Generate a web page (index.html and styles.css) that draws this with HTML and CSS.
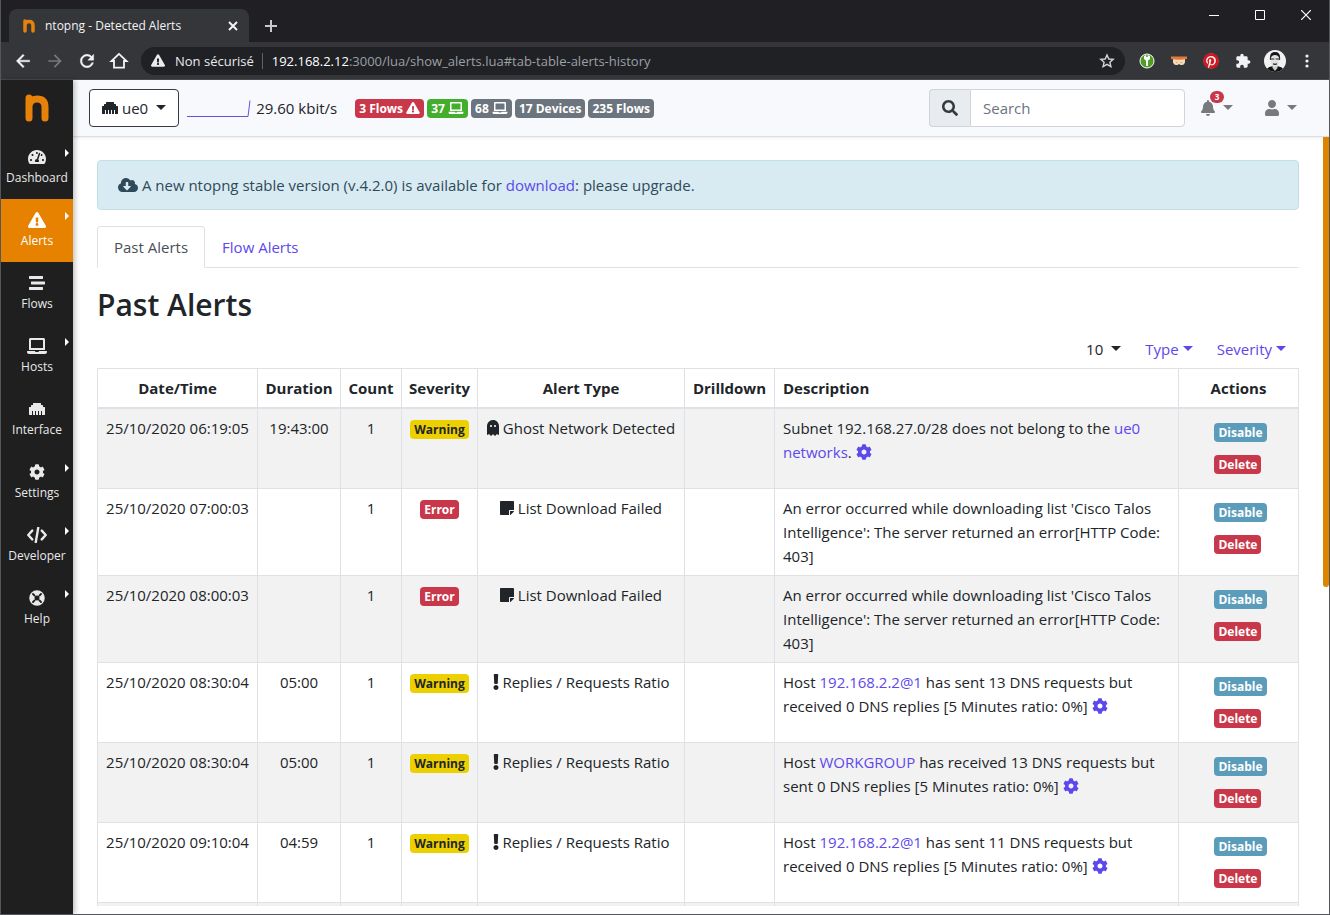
FILE: index.html
```html
<!DOCTYPE html>
<html lang="en">
<head>
<meta charset="utf-8">
<title>ntopng - Detected Alerts</title>
<link rel="stylesheet" href="styles.css">
</head>
<body>
<svg class="sprite" aria-hidden="true">
  <symbol id="warn" viewBox="0 0 576 512"><path d="M569.517 440.013C587.975 472.007 564.806 512 527.94 512H48.054c-36.937 0-59.999-40.055-41.577-71.987L246.423 23.985c18.467-32.009 64.72-31.951 83.154 0l239.94 416.028zM288 354c-25.405 0-46 20.595-46 46s20.595 46 46 46 46-20.595 46-46-20.595-46-46-46zm-43.673-165.346l7.418 136c.347 6.364 5.609 11.346 11.982 11.346h48.546c6.373 0 11.635-4.982 11.982-11.346l7.418-136c.375-6.874-5.098-12.654-11.982-12.654h-63.383c-6.884 0-12.356 5.78-11.981 12.654z"/></symbol>
  <symbol id="gauge" viewBox="0 0 576 512"><path d="M288 32C128.94 32 0 160.94 0 320c0 52.8 14.25 102.26 39.06 144.8 5.61 9.62 16.3 15.2 27.44 15.2h443c11.14 0 21.83-5.58 27.44-15.2C561.75 422.26 576 372.8 576 320c0-159.06-128.94-288-288-288zm0 64c14.71 0 26.58 10.13 30.32 23.65-1.11 2.26-2.64 4.23-3.45 6.67l-9.22 27.67c-5.13 3.49-10.97 6.01-17.64 6.01-17.67 0-32-14.33-32-32S270.33 96 288 96zM96 384c-17.67 0-32-14.33-32-32s14.33-32 32-32 32 14.33 32 32-14.33 32-32 32zm48-160c-17.67 0-32-14.33-32-32s14.33-32 32-32 32 14.33 32 32-14.33 32-32 32zm246.77-72.41l-61.33 184C343.13 347.33 352 364.54 352 384c0 11.72-3.38 22.55-8.88 32H232.88c-5.5-9.45-8.88-20.28-8.88-32 0-33.94 26.5-61.43 59.9-63.59l61.34-184.01c4.17-12.56 17.73-19.45 30.36-15.17 12.57 4.19 19.35 17.79 15.17 30.36zm14.66 57.2l15.52-46.55c3.47-1.29 7.13-2.23 11.05-2.23 17.67 0 32 14.33 32 32s-14.33 32-32 32c-11.38-.01-20.89-6.28-26.57-15.22zM480 384c-17.67 0-32-14.33-32-32s14.33-32 32-32 32 14.33 32 32-14.33 32-32 32z"/></symbol>
  <symbol id="stream" viewBox="0 0 512 512"><path d="M16 128h416c8.84 0 16-7.16 16-16V48c0-8.84-7.16-16-16-16H16C7.16 32 0 39.16 0 48v64c0 8.84 7.16 16 16 16zm480 80H80c-8.84 0-16 7.16-16 16v64c0 8.84 7.16 16 16 16h416c8.84 0 16-7.16 16-16v-64c0-8.84-7.16-16-16-16zm-64 176H16c-8.84 0-16 7.16-16 16v64c0 8.84 7.16 16 16 16h416c8.84 0 16-7.16 16-16v-64c0-8.84-7.16-16-16-16z"/></symbol>
  <symbol id="laptop" viewBox="0 0 640 512"><path d="M624 416H381.54c-.74 19.81-14.71 32-32.74 32H288c-18.69 0-33.02-17.47-32.77-32H16c-8.8 0-16 7.2-16 16v16c0 35.2 28.8 64 64 64h512c35.2 0 64-28.8 64-64v-16c0-8.8-7.2-16-16-16zM576 48c0-26.4-21.6-48-48-48H112C85.6 0 64 21.6 64 48v336h512V48zm-64 272H128V64h384v256z"/></symbol>
  <symbol id="ethernet" viewBox="0 0 512 512"><path d="M496 192h-48v-48c0-8.8-7.2-16-16-16h-48V80c0-8.8-7.2-16-16-16H144c-8.8 0-16 7.2-16 16v48H80c-8.8 0-16 7.2-16 16v48H16c-8.8 0-16 7.2-16 16v224c0 8.8 7.2 16 16 16h80V320h32v128h64V320h32v128h64V320h32v128h64V320h32v128h80c8.8 0 16-7.2 16-16V208c0-8.8-7.2-16-16-16z"/></symbol>
  <symbol id="cog" viewBox="0 0 512 512"><path d="M487.4 315.7l-42.6-24.6c4.3-23.2 4.3-47 0-70.2l42.6-24.6c4.9-2.8 7.1-8.6 5.5-14-11.1-35.6-30-67.8-54.7-94.6-3.8-4.1-10-5.1-14.8-2.3L380.8 110c-17.9-15.4-38.5-27.3-60.8-35.1V25.8c0-5.6-3.9-10.5-9.4-11.7-36.7-8.2-74.3-7.8-109.2 0-5.5 1.2-9.4 6.1-9.4 11.7V75c-22.2 7.9-42.8 19.8-60.8 35.1L88.7 85.5c-4.9-2.8-11-1.9-14.8 2.3-24.7 26.7-43.6 58.9-54.7 94.6-1.7 5.4.6 11.2 5.5 14L67.3 221c-4.3 23.2-4.3 47 0 70.2l-42.6 24.6c-4.9 2.8-7.1 8.6-5.5 14 11.1 35.6 30 67.8 54.7 94.6 3.8 4.1 10 5.1 14.8 2.3l42.6-24.6c17.9 15.4 38.5 27.3 60.8 35.1v49.2c0 5.6 3.9 10.5 9.4 11.7 36.7 8.2 74.3 7.8 109.2 0 5.5-1.2 9.4-6.1 9.4-11.7v-49.2c22.2-7.9 42.8-19.8 60.8-35.1l42.6 24.6c4.9 2.8 11 1.9 14.8-2.3 24.7-26.7 43.6-58.9 54.7-94.6 1.5-5.5-.7-11.3-5.6-14.1zM256 336c-44.1 0-80-35.9-80-80s35.9-80 80-80 80 35.9 80 80-35.9 80-80 80z"/></symbol>
  <symbol id="code" viewBox="0 0 640 512"><path d="M360 24L280 488M168 116L40 256l128 140M472 116l128 140-128 140" fill="none" stroke="currentColor" stroke-width="76" stroke-linecap="round" stroke-linejoin="round"/></symbol>
  <symbol id="ring" viewBox="0 0 512 512"><circle cx="256" cy="256" r="164" fill="none" stroke="currentColor" stroke-width="168"/><path d="M128 128l50 50M384 128l-50 50M128 384l50-50M384 384l-50-50" stroke="#1f1f1f" stroke-width="60" stroke-linecap="round"/></symbol>
  <symbol id="search" viewBox="0 0 512 512"><path d="M505 442.7L405.3 343c-4.5-4.5-10.6-7-17-7H372c27.6-35.3 44-79.7 44-128C416 93.1 322.9 0 208 0S0 93.1 0 208s93.1 208 208 208c48.3 0 92.7-16.4 128-44v16.3c0 6.4 2.5 12.5 7 17l99.7 99.7c9.4 9.4 24.6 9.4 33.9 0l28.3-28.3c9.4-9.4 9.4-24.6.1-34zM208 336c-70.7 0-128-57.2-128-128 0-70.7 57.2-128 128-128 70.7 0 128 57.2 128 128 0 70.7-57.2 128-128 128z"/></symbol>
  <symbol id="bell" viewBox="0 0 448 512"><path d="M224 512c35.32 0 63.97-28.65 63.97-64H160.03c0 35.35 28.65 64 63.97 64zm215.39-149.71c-19.32-20.76-55.47-51.99-55.47-154.29 0-77.7-54.48-139.9-127.94-155.16V32c0-17.67-14.32-32-31.98-32s-31.98 14.33-31.98 32v20.84C118.56 68.1 64.08 130.3 64.08 208c0 102.3-36.15 133.53-55.47 154.29-6 6.45-8.66 14.16-8.61 21.71.11 16.4 12.98 32 32.1 32h383.8c19.12 0 32-15.6 32.1-32 .05-7.55-2.61-15.27-8.61-21.71z"/></symbol>
  <symbol id="user" viewBox="0 0 448 512"><path d="M224 256c70.7 0 128-57.3 128-128S294.7 0 224 0 96 57.3 96 128s57.3 128 128 128zm89.6 32h-16.7c-22.2 10.2-46.9 16-72.9 16s-50.6-5.8-72.9-16h-16.7C60.2 288 0 348.2 0 422.4V464c0 26.5 21.5 48 48 48h352c26.5 0 48-21.5 48-48v-41.6c0-74.2-60.2-134.4-134.4-134.4z"/></symbol>
  <symbol id="cloud" viewBox="0 0 640 512"><path d="M537.6 226.6c4.1-10.7 6.4-22.4 6.4-34.6 0-53-43-96-96-96-19.7 0-38.1 6-53.3 16.2C367 64.2 315.3 32 256 32c-88.4 0-160 71.6-160 160 0 2.7.1 5.4.2 8.1C40.2 219.8 0 273.2 0 336c0 79.5 64.5 144 144 144h368c70.7 0 128-57.3 128-128 0-61.9-44-113.6-102.4-125.4zm-132.9 88.7L299.3 420.7c-6.2 6.2-16.4 6.2-22.6 0L171.3 315.3c-10.1-10.1-2.9-27.3 11.3-27.3H248V176c0-8.8 7.2-16 16-16h48c8.8 0 16 7.2 16 16v112h65.4c14.2 0 21.4 17.2 11.3 27.3z"/></symbol>
  <symbol id="ghost" viewBox="0 0 384 512"><path d="M186.1.09C81.01 3.24 0 94.92 0 200.05v263.92c0 14.26 17.23 21.39 27.31 11.31l24.92-18.53c6.66-4.95 16-3.99 21.51 2.21l42.95 48.35c6.25 6.25 16.38 6.25 22.63 0l40.72-45.85c6.37-7.17 17.56-7.17 23.92 0l40.72 45.85c6.25 6.25 16.38 6.25 22.63 0l42.95-48.35c5.51-6.2 14.85-7.17 21.51-2.21l24.92 18.53c10.08 10.08 27.31 2.94 27.31-11.31V192C384 84 294.83-3.17 186.1.09zM128 224c-17.67 0-32-14.33-32-32s14.33-32 32-32 32 14.33 32 32-14.33 32-32 32zm128 0c-17.67 0-32-14.33-32-32s14.33-32 32-32 32 14.33 32 32-14.33 32-32 32z"/></symbol>
  <symbol id="note" viewBox="0 0 448 512"><path d="M312 320h136V56c0-13.3-10.7-24-24-24H24C10.7 32 0 42.7 0 56v400c0 13.3 10.7 24 24 24h264V344c0-13.2 10.8-24 24-24zm129 55l-98 98c-4.5 4.5-10.6 7-17 7h-6V352h128v6.1c0 6.3-2.5 12.4-7 16.9z"/></symbol>
  <symbol id="bang" viewBox="0 0 192 512"><path d="M176 432c0 44.112-35.888 80-80 80s-80-35.888-80-80 35.888-80 80-80 80 35.888 80 80zM25.26 25.199l13.6 272C39.499 309.972 50.041 320 62.83 320h66.34c12.789 0 23.331-10.028 23.97-22.801l13.6-272C167.425 11.49 156.496 0 142.77 0H49.23C35.504 0 24.575 11.49 25.26 25.199z"/></symbol>
  <symbol id="logo" viewBox="0 0 24 28"><path d="M4 24V4M4 12Q5 5 12 5Q20 5 20 13V24" fill="none" stroke="#e6820a" stroke-width="7" stroke-linecap="round" stroke-linejoin="round"/></symbol>
</svg>

<div class="window">
  <header class="titlebar">
    <div class="browser-tab">
      <svg class="favicon"><use href="#logo"/></svg>
      <span class="tab-title">ntopng - Detected Alerts</span>
      <button class="chrome-btn" aria-label="Close tab"><svg width="10" height="10" viewBox="0 0 10 10"><path d="M1 1l8 8M9 1L1 9" stroke="currentColor" stroke-width="2"/></svg></button>
    </div>
    <button class="chrome-btn new-tab" aria-label="New tab"><svg width="12" height="12" viewBox="0 0 12 12"><path d="M6 0v12M0 6h12" stroke="currentColor" stroke-width="2"/></svg></button>
    <div class="window-controls">
      <button class="chrome-btn" aria-label="Minimize"><svg width="10" height="10" viewBox="0 0 10 10"><path d="M0 5.500h10" stroke="#fff"/></svg></button>
      <button class="chrome-btn" aria-label="Maximize"><svg width="10" height="10" viewBox="0 0 10 10"><path d="M.5 .5h9v9h-9z" fill="none" stroke="#fff"/></svg></button>
      <button class="chrome-btn" aria-label="Close"><svg width="10" height="10" viewBox="0 0 10 10"><path d="M0 0l10 10M10 0L0 10" stroke="#fff" stroke-width="1.200"/></svg></button>
    </div>
  </header>

  <div class="toolbar">
    <div class="nav-buttons">
      <button class="chrome-btn" aria-label="Back"><svg width="20" height="20" viewBox="0 0 24 24"><path d="M20 11H7.830l5.590-5.590L12 4l-8 8 8 8 1.410-1.410L7.830 13H20v-2z" stroke="currentColor" stroke-width=".5"/></svg></button>
      <button class="chrome-btn dim" aria-label="Forward"><svg width="20" height="20" viewBox="0 0 24 24"><path d="M12 4l-1.410 1.410L16.170 11H4v2h12.170l-5.580 5.590L12 20l8-8z"/></svg></button>
      <button class="chrome-btn" aria-label="Reload"><svg width="20" height="20" viewBox="0 0 24 24"><path d="M17.650 6.350C16.200 4.900 14.210 4 12 4c-4.420 0-7.990 3.580-7.990 8s3.570 8 7.990 8c3.730 0 6.840-2.550 7.730-6h-2.080c-.82 2.330-3.040 4-5.650 4-3.310 0-6-2.690-6-6s2.690-6 6-6c1.660 0 3.140.69 4.220 1.780L13 11h7V4l-2.350 2.350z" stroke="currentColor" stroke-width=".5"/></svg></button>
      <button class="chrome-btn" aria-label="Home"><svg width="20" height="20" viewBox="0 0 24 24"><path d="M12 3.500L3 12h3v8h12v-8h3z" fill="none" stroke="currentColor" stroke-width="2.200"/></svg></button>
    </div>
    <div class="omnibox">
      <svg class="omni-warn"><use href="#warn"/></svg>
      <span>Non sécurisé</span>
      <span class="url"><b>192.168.2.12</b>:3000/lua/show_alerts.lua#tab-table-alerts-history</span>
      <button class="chrome-btn star" aria-label="Bookmark"><svg width="16" height="16" viewBox="0 0 16 16"><path d="M8 2l1.800 4 4.400.4-3.300 2.900 1 4.300L8 11.300l-3.900 2.300 1-4.300L1.800 6.400 6.200 6z" fill="none" stroke="currentColor" stroke-width="1.400"/></svg></button>
    </div>
    <div class="extensions">
      <button class="chrome-btn" aria-label="Password extension"><svg width="16" height="16" viewBox="0 0 16 16"><circle cx="8" cy="8" r="7" fill="#4f9d22" stroke="#fff" stroke-width="1"/><path d="M5 3q3-2 6 0v3L9 7.500V13H7V7.500L5 6z" fill="#fff"/><circle cx="8" cy="3" r="1" fill="#4f9d22"/></svg></button>
      <button class="chrome-btn" aria-label="Privacy extension"><svg width="16" height="16" viewBox="0 0 16 16"><path d="M2 6h12v3.500q-1 2.500-3 2.500H9.500L8 11l-1.500 1H5q-2 0-3-2.500z" fill="#f3d9b8"/><path d="M0 3.500h16V6q-8 1.500-16 0z" fill="#e07a35"/><path d="M5 9.500h1.500M9.500 9.500H11" stroke="#c9a67c"/></svg></button>
      <button class="chrome-btn" aria-label="Pinterest"><svg width="16" height="16" viewBox="0 0 496 512"><circle cx="248" cy="256" r="240" fill="#fff"/><path fill="#d01622" stroke="#d01622" stroke-width="6" d="M496 256c0 137-111 248-248 248-25.6 0-50.2-3.9-73.4-11.1 10.1-16.5 25.2-43.5 30.8-65 3-11.6 15.4-59 15.4-59 8.1 15.4 31.7 28.5 56.8 28.5 74.8 0 128.7-68.8 128.7-154.3 0-81.9-66.9-143.2-152.9-143.2-107 0-163.9 71.8-163.9 150.1 0 36.4 19.4 81.7 50.3 96.1 4.7 2.2 7.2 1.2 8.3-3.3.8-3.4 5-20.3 6.9-28.1.6-2.5.3-4.7-1.7-7.1-10.1-12.5-18.3-35.300-18.3-56.6 0-54.7 41.4-107.6 112-107.6 60.9 0 103.6 41.5 103.6 100.9 0 67.1-33.9 113.6-78 113.6-24.3 0-42.600-20.1-36.7-44.8 7-29.5 20.5-61.3 20.5-82.6 0-19-10.2-34.9-31.4-34.9-24.9 0-44.9 25.7-44.9 60.2 0 22 7.4 36.8 7.4 36.8s-24.5 103.8-29 123.2c-5 21.4-3 51.6-.9 71.2C65.4 450.9 0 361.1 0 256 0 119 111 8 248 8s248 111 248 248z"/></svg></button>
      <button class="chrome-btn" aria-label="Extensions"><svg width="16" height="16" viewBox="0 0 24 24"><path d="M20.500 11H19V7c0-1.100-.9-2-2-2h-4V3.500C13 2.120 11.880 1 10.500 1S8 2.120 8 3.500V5H4c-1.100 0-1.990.9-1.990 2v3.800H3.500c1.490 0 2.700 1.210 2.700 2.700s-1.210 2.700-2.700 2.700H2V20c0 1.100.9 2 2 2h3.800v-1.500c0-1.490 1.210-2.700 2.700-2.700 1.490 0 2.700 1.210 2.700 2.700V22H17c1.100 0 2-.9 2-2v-4h1.500c1.380 0 2.500-1.120 2.500-2.500S21.880 11 20.500 11z"/></svg></button>
      <button class="chrome-btn" aria-label="Profile"><svg class="avatar" width="22" height="22" viewBox="0 0 22 22"><clipPath id="face"><circle cx="11" cy="11" r="11"/></clipPath><g clip-path="url(#face)"><path d="M0 0h22v22H0z" fill="#f2f2f2"/><path d="M2 22q0-6 9-6t9 6z" fill="#111"/><path d="M8.500 14h5v4L11 21l-2.500-3z" fill="#ccc"/><path d="M6 10q-1-8 5-8t5 8z" fill="#161616"/><path d="M6.800 8q1-3 4.200-3t4.200 3v4q-1 5-4.200 5t-4.200-5z" fill="#e0e0e0"/><path d="M6.500 9h3.800M11.700 9h3.800M9 13.800q2 1 4 0" stroke="#222" fill="none" stroke-width="1.200"/></g></svg></button>
      <button class="chrome-btn" aria-label="Menu"><svg width="16" height="16" viewBox="0 0 16 16"><circle cx="8" cy="3" r="1.600"/><circle cx="8" cy="8" r="1.600"/><circle cx="8" cy="13" r="1.600"/></svg></button>
    </div>
  </div>

  <div class="page">
    <nav class="sidebar">
      <a class="brand" href="#" aria-label="ntopng"><svg width="24" height="28"><use href="#logo"/></svg></a>
      <a class="side-item has-sub" href="#"><svg class="side-icon"><use href="#gauge"/></svg>Dashboard</a>
      <a class="side-item has-sub active" href="#"><svg class="side-icon"><use href="#warn"/></svg>Alerts</a>
      <a class="side-item" href="#"><svg class="side-icon"><use href="#stream"/></svg>Flows</a>
      <a class="side-item has-sub" href="#"><svg class="side-icon"><use href="#laptop"/></svg>Hosts</a>
      <a class="side-item" href="#"><svg class="side-icon"><use href="#ethernet"/></svg>Interface</a>
      <a class="side-item has-sub" href="#"><svg class="side-icon"><use href="#cog"/></svg>Settings</a>
      <a class="side-item has-sub" href="#"><svg class="side-icon"><use href="#code"/></svg>Developer</a>
      <a class="side-item has-sub" href="#"><svg class="side-icon"><use href="#ring"/></svg>Help</a>
    </nav>

    <div class="content">
      <div class="navbar">
        <button class="iface caret"><svg class="icon"><use href="#ethernet"/></svg>ue0</button>
        <svg class="spark" viewBox="0 0 64 20"><path d="M0 18.500h61l2-16" fill="none" stroke="#6a50e0"/></svg>
        <span class="rate">29.60 kbit/s</span>
        <div class="status">
          <a class="badge red" href="#">3 Flows <svg class="badge-icon"><use href="#warn"/></svg></a>
          <a class="badge green" href="#">37 <svg class="badge-icon wide"><use href="#laptop"/></svg></a>
          <a class="badge grey" href="#">68 <svg class="badge-icon wide"><use href="#laptop"/></svg></a>
          <a class="badge grey" href="#">17 Devices</a>
          <a class="badge grey" href="#">235 Flows</a>
        </div>
        <form class="search">
          <label for="q" aria-label="Search"><svg class="icon"><use href="#search"/></svg></label>
          <input id="q" type="text" placeholder="Search">
        </form>
        <button class="menu caret" aria-label="Notifications"><svg class="icon bell"><use href="#bell"/></svg><span class="count">3</span></button>
        <button class="menu user caret" aria-label="Account"><svg class="icon"><use href="#user"/></svg></button>
      </div>

      <main class="main">
        <div class="alert"><svg class="icon cloud"><use href="#cloud"/></svg> A new ntopng stable version (v.4.2.0) is available for <a href="#">download</a>: please upgrade.</div>
        <nav class="tabs">
          <a class="tab current" href="#">Past Alerts</a>
          <a class="tab" href="#">Flow Alerts</a>
        </nav>
        <h2>Past Alerts</h2>
        <div class="filters">
          <button class="filter caret dark">10</button>
          <button class="filter caret">Type</button>
          <button class="filter caret">Severity</button>
        </div>
        <table class="alerts">
          <colgroup><col class="c-date"><col class="c-dur"><col class="c-count"><col class="c-sev"><col class="c-type"><col class="c-drill"><col><col class="c-act"></colgroup>
          <thead>
            <tr><th>Date/Time</th><th>Duration</th><th>Count</th><th>Severity</th><th>Alert Type</th><th>Drilldown</th><th class="desc">Description</th><th>Actions</th></tr>
          </thead>
          <tbody>
            <tr><td>25/10/2020 06:19:05</td><td>19:43:00</td><td>1</td><td><span class="badge yellow">Warning</span></td><td><svg class="icon ghost"><use href="#ghost"/></svg> Ghost Network Detected</td><td></td><td class="desc">Subnet 192.168.27.0/28 does not belong to the <a href="#">ue0 networks</a>. <a href="#" aria-label="Configure"><svg class="icon"><use href="#cog"/></svg></a></td><td><div class="actions"><button class="badge blue">Disable</button><button class="badge red">Delete</button></div></td></tr>
            <tr><td>25/10/2020 07:00:03</td><td></td><td>1</td><td><span class="badge red">Error</span></td><td><svg class="icon note"><use href="#note"/></svg> List Download Failed</td><td></td><td class="desc">An error occurred while downloading list 'Cisco Talos Intelligence': The server returned an error[HTTP Code: 403]</td><td><div class="actions"><button class="badge blue">Disable</button><button class="badge red">Delete</button></div></td></tr>
            <tr><td>25/10/2020 08:00:03</td><td></td><td>1</td><td><span class="badge red">Error</span></td><td><svg class="icon note"><use href="#note"/></svg> List Download Failed</td><td></td><td class="desc">An error occurred while downloading list 'Cisco Talos Intelligence': The server returned an error[HTTP Code: 403]</td><td><div class="actions"><button class="badge blue">Disable</button><button class="badge red">Delete</button></div></td></tr>
            <tr><td>25/10/2020 08:30:04</td><td>05:00</td><td>1</td><td><span class="badge yellow">Warning</span></td><td><svg class="icon bang"><use href="#bang"/></svg> Replies / Requests Ratio</td><td></td><td class="desc">Host <a href="#">192.168.2.2@1</a> has sent 13 DNS requests but received 0 DNS replies [5 Minutes ratio: 0%] <a href="#" aria-label="Configure"><svg class="icon"><use href="#cog"/></svg></a></td><td><div class="actions"><button class="badge blue">Disable</button><button class="badge red">Delete</button></div></td></tr>
            <tr><td>25/10/2020 08:30:04</td><td>05:00</td><td>1</td><td><span class="badge yellow">Warning</span></td><td><svg class="icon bang"><use href="#bang"/></svg> Replies / Requests Ratio</td><td></td><td class="desc">Host <a href="#">WORKGROUP</a> has received 13 DNS requests but sent 0 DNS replies [5 Minutes ratio: 0%] <a href="#" aria-label="Configure"><svg class="icon"><use href="#cog"/></svg></a></td><td><div class="actions"><button class="badge blue">Disable</button><button class="badge red">Delete</button></div></td></tr>
            <tr><td>25/10/2020 09:10:04</td><td>04:59</td><td>1</td><td><span class="badge yellow">Warning</span></td><td><svg class="icon bang"><use href="#bang"/></svg> Replies / Requests Ratio</td><td></td><td class="desc">Host <a href="#">192.168.2.2@1</a> has sent 11 DNS requests but received 0 DNS replies [5 Minutes ratio: 0%] <a href="#" aria-label="Configure"><svg class="icon"><use href="#cog"/></svg></a></td><td><div class="actions"><button class="badge blue">Disable</button><button class="badge red">Delete</button></div></td></tr>
            <tr><td></td><td></td><td></td><td></td><td></td><td></td><td></td><td></td></tr>
          </tbody>
        </table>
      </main>
      <div class="scroll-thumb"></div>
    </div>
  </div>
</div>
</body>
</html>
```
FILE: styles.css
```css
* { box-sizing: border-box; }

body {
  margin: 0;
  font: 15px/24px "Open Sans", "Noto Sans", sans-serif;
  color: #212529;
}

a { color: #5d48ec; text-decoration: none; }
button { font: inherit; color: inherit; background: none; border: 0; padding: 0; }
svg { fill: currentColor; }

.sprite { position: absolute; width: 0; height: 0; }

.window {
  height: 100vh;
  display: flex;
  flex-direction: column;
  overflow: hidden;
  background: #202124;
  border: solid #55565a;
  border-width: 0 1px 1px;
}

/* Browser frame */
.titlebar {
  display: flex;
  height: 42px;
  padding-left: 8px;
  background: #202024;
}

.browser-tab {
  display: flex;
  align-items: center;
  width: 240px;
  margin-top: 9px;
  padding: 1px 10px 0 13px;
  border-radius: 8px 8px 0 0;
  background: #35363a;
  color: #f1f3f4;
  font-size: 12px;
}

.favicon { width: 14px; height: 14px; margin-right: 9px; }
.tab-title { flex: 1; white-space: nowrap; }

.chrome-btn {
  display: flex;
  align-items: center;
  justify-content: center;
  color: #f1f3f4;
}

.browser-tab .chrome-btn { width: 12px; height: 12px; }
.new-tab { width: 24px; margin: 10px 0 0 10px; color: #c8c9cb; }
.window-controls { display: flex; height: 30px; margin-left: auto; }
.window-controls .chrome-btn { width: 46px; }

.toolbar {
  display: flex;
  align-items: center;
  height: 38px;
  background: #35363a;
  border-bottom: 1px solid #4a4b4f;
  color: #e8eaed;
  font-size: 13px;
}

.nav-buttons { display: flex; gap: 12px; padding: 0 12px; }
.chrome-btn.dim { color: #77787c; }

.omnibox {
  flex: 1;
  display: flex;
  align-items: center;
  height: 28px;
  padding: 0 10px;
  border-radius: 14px;
  background: #202124;
  white-space: nowrap;
}

.omni-warn { width: 14px; height: 13px; margin-right: 10px; }
.url { margin-left: 8px; padding-left: 9px; border-left: 1px solid #5f6368; line-height: 16px; color: #9aa0a6; }
.url b { font-weight: 400; color: #fff; }
.star { margin-left: auto; color: #d5d6d8; }

.extensions { display: flex; align-items: center; gap: 16px; padding: 0 14px; }
.extensions .chrome-btn { width: 16px; }
.avatar { flex: none; }

/* Application */
.page { flex: 1; display: flex; min-height: 0; background: #fff; }

.sidebar {
  width: 72px;
  flex: none;
  background: #1f1f1f;
  box-shadow: 2px 0 5px rgba(0, 0, 0, .25);
  z-index: 2;
}

.brand { display: flex; justify-content: center; height: 56px; padding-top: 14px; }

.side-item {
  position: relative;
  display: flex;
  flex-direction: column;
  align-items: center;
  height: 63px;
  padding-top: 13px;
  gap: 1px;
  color: #e9e9e9;
  font-size: 12px;
}

.side-item.active { background: #e68200; color: #fff; }
.side-icon { width: 20px; height: 16px; }

.has-sub::after {
  content: "";
  position: absolute;
  right: 4px;
  top: 13px;
  border: 4px solid transparent;
  border-left-color: #fff;
  border-right: 0;
}

.content { position: relative; flex: 1; min-width: 0; display: flex; flex-direction: column; }

.navbar {
  display: flex;
  align-items: center;
  height: 57px;
  padding: 0 32px 0 16px;
  background: #f8f9fc;
  border-bottom: 1px solid #dcdee2;
  box-shadow: 0 1px 3px rgba(0, 0, 0, .08);
}

.icon { width: 16px; height: 16px; vertical-align: -2px; }

.caret::after {
  content: "";
  display: inline-block;
  margin-left: 4px;
  vertical-align: 4px;
  border: 5px solid transparent;
  border-top-color: currentColor;
  border-bottom: 0;
}

.iface {
  height: 38px;
  padding: 0 12px;
  border: 1px solid #343a40;
  border-radius: 4px;
  background: #fff;
}
.iface .icon { margin-right: 4px; }
.iface::after { margin-left: 8px; }

.spark { width: 64px; height: 20px; margin: 0 5px 0 8px; }
.status { display: flex; gap: 3px; margin-left: 18px; }

.badge {
  display: inline-block;
  height: 19px;
  padding: 0 4px;
  border-radius: 4px;
  font-size: 12px;
  line-height: 19px;
  font-weight: 700;
  color: #fff;
  white-space: nowrap;
}
.red { background: #c9384a; }
.green { background: #42ae2c; }
.grey { background: #6c757d; }
.blue { background: #5a9cba; }
.yellow { background: #edd000; color: #212529; }
.badge-icon { width: 14px; height: 12px; vertical-align: -1px; }
.badge-icon.wide { width: 16px; }

.search { display: flex; width: 256px; height: 38px; margin-left: auto; }
.search label {
  display: flex;
  align-items: center;
  justify-content: center;
  width: 41px;
  border: 1px solid #ced4da;
  border-right: 0;
  border-radius: 4px 0 0 4px;
  background: #e9ecef;
  color: #343a40;
}
.search input {
  flex: 1;
  min-width: 0;
  padding: 0 12px;
  border: 1px solid #ced4da;
  border-radius: 0 4px 4px 0;
  font: inherit;
  background: #fff;
}
.search input::placeholder { color: #6c757d; }

.menu { position: relative; margin-left: 15px; color: #777a7c; }
.menu::after { margin-left: 7px; }
.menu.user { margin-left: 31px; }
.count {
  position: absolute;
  left: 10px;
  top: -5px;
  width: 14px;
  height: 12px;
  border-radius: 6px;
  background: #c9384a;
  color: #fff;
  font: 700 8px/12px "Open Sans", sans-serif;
}

.main {
  flex: 1;
  min-height: 0;
  margin-bottom: 8px;
  padding: 23px 30px 0 24px;
  overflow: hidden;
}

.scroll-thumb {
  position: absolute;
  top: 57px;
  right: 0;
  width: 6px;
  height: 54%;
  border-radius: 0 0 3px 3px;
  background: #dd8500;
}

.alert {
  padding: 12px 20px;
  margin-bottom: 16px;
  border: 1px solid #c3dfe6;
  border-radius: 4px;
  background: #d8ebf2;
  color: #2f4a58;
}
.cloud { width: 20px; }

.tabs { display: flex; border-bottom: 1px solid #dee2e6; }
.tab { padding: 8px 16px; border: 1px solid transparent; border-bottom: 0; margin-bottom: -1px; }
.tab.current {
  border-color: #dee2e6;
  border-bottom: 1px solid #fff;
  border-radius: 4px 4px 0 0;
  background: #fff;
  color: #495057;
}

h2 { margin: 18px 0 13px; font-size: 30px; line-height: 38px; font-weight: 600; }

.filters { display: flex; justify-content: flex-end; gap: 24px; padding-right: 13px; margin-bottom: 7px; }
.filter { color: #5d48ec; }
.filter.dark { color: #212529; }
.filter.dark::after { margin-left: 8px; }

.alerts { width: 100%; table-layout: fixed; border-collapse: collapse; }
.alerts th, .alerts td {
  padding: 7px;
  border: 1px solid #dee2e6;
  text-align: center;
  vertical-align: top;
}
.alerts th { padding: 7px 0; border-bottom-width: 2px; font-weight: 700; white-space: nowrap; }
.alerts td { height: 80px; }
.alerts tbody tr:nth-child(odd) { background: #f2f2f2; }
.alerts .desc { text-align: left; padding-left: 8px; }
.alerts .badge { vertical-align: middle; }
.ghost { width: 12px; }
.note { width: 14px; }
.bang { width: 6px; }

.c-date { width: 160px; }
.c-dur { width: 83px; }
.c-count { width: 61px; }
.c-sev { width: 76px; }
.c-type { width: 207px; }
.c-drill { width: 90px; }
.c-act { width: 120px; }

.actions {
  display: inline-grid;
  justify-items: start;
  gap: 13px;
  padding: 7px 0 0 4px;
  vertical-align: top;
}
```
